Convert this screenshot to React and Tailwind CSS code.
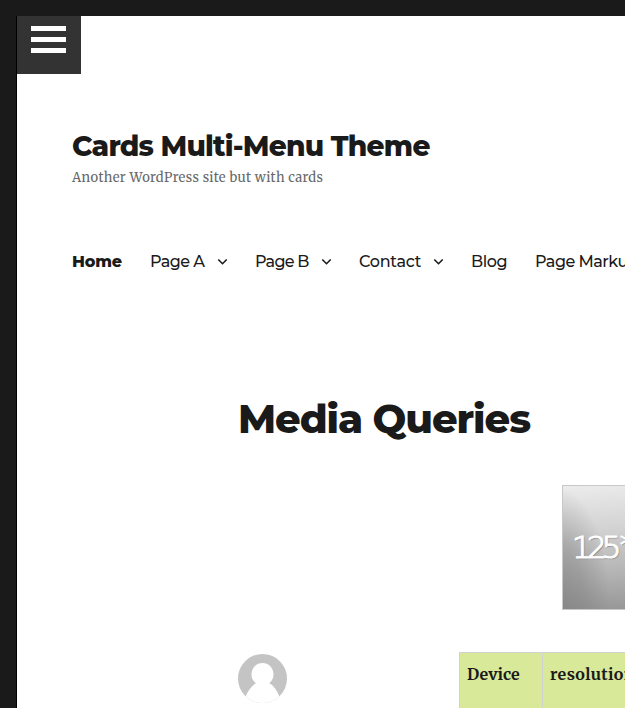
const sans = "font-['Montserrat','Inter',sans-serif]";
const serif = "font-['Merriweather','DejaVu_Serif_Condensed','DejaVu_Serif',serif]";

function Chevron() {
  return (
    <svg width="11" height="8" viewBox="0 0 11 8" className="shrink-0" fill="none" stroke="#1a1a1a" strokeWidth="1.6">
      <path d="M1.3 1.5 5.5 5.7 9.7 1.5" />
    </svg>
  );
}

function NavItem({ label, box, text, menu }) {
  return (
    <a className={`flex shrink-0 items-center ${box}`}>
      <span className={text}>{label}</span>
      {menu && <Chevron />}
    </a>
  );
}

export default function App() {
  return (
    <div className="flex h-[708px] w-[625px] flex-col overflow-hidden bg-[#1a1a1a] pt-4 pl-4 text-[#1a1a1a]">
      <div className="flex min-h-0 flex-1 flex-col overflow-hidden border-l border-black bg-white">
        <button className="flex h-[58px] w-16 shrink-0 flex-col gap-1.5 bg-[#333] pt-[10px] pl-[14px]">
          <span className="h-[5px] w-[35px] bg-white" />
          <span className="h-[5px] w-[35px] bg-white" />
          <span className="h-[5px] w-[35px] bg-white" />
        </button>

        <header className="flex shrink-0 flex-col pt-[54px] pl-[55px] whitespace-nowrap">
          <h1 className={`${sans} h-9 text-[28px] leading-9 font-extrabold tracking-[-0.78px]`}>Cards Multi-Menu Theme</h1>
          <p className={`${serif} mt-[5px] h-[18px] text-[13px] leading-[18px] tracking-[0.35px] text-[#686868]`}>Another WordPress site but with cards</p>
          <nav className={`${sans} mt-[63px] flex h-6 text-[16px] leading-6 font-medium`}>
            <NavItem label="Home" box="w-[78px]" text="font-extrabold tracking-[-0.2px]" />
            <NavItem label="Page A" box="w-[105px]" text="w-[67px] tracking-[-0.55px]" menu />
            <NavItem label="Page B" box="w-[104px]" text="w-[66px] tracking-[-0.75px]" menu />
            <NavItem label="Contact" box="w-[112px]" text="w-[74px] tracking-[-0.25px]" menu />
            <NavItem label="Blog" box="w-16" text="tracking-[-0.45px]" />
            <NavItem label="Page Markup" box="w-[110px]" text="tracking-[-0.5px]" />
          </nav>
        </header>

        <main className="flex shrink-0 flex-col pt-[121px] pl-[221px] whitespace-nowrap">
          <h2 className={`${sans} h-12 text-[40px] leading-[48px] font-extrabold tracking-[-1.08px]`}>Media Queries</h2>
          <div className="mt-[42px] ml-[324px] flex h-[125px] w-[125px] items-center border border-[#c8c8c8] bg-[radial-gradient(ellipse_55px_115px_at_-8px_115px,#77777799_0%,#77777766_50%,transparent_100%),linear-gradient(175deg,#ececec_0%,#d2d2d2_35%,#b4b4b4_68%,#939393_100%)] pl-[9px]">
            <div className="flex items-start font-['DejaVu_Sans_Light','DejaVu_Sans',sans-serif] text-[31px] leading-none font-extralight tracking-[-4.8px] text-white [-webkit-text-stroke:1.2px_white] [text-shadow:1px_1px_1px_#777]">
              <span className="-mt-px">125</span>
              <span className="-mt-1 ml-[3px]">*125</span>
            </div>
          </div>
          <div className="mt-[42px] flex items-start">
            <svg width="49" height="49" viewBox="0 0 49 49" className="mt-0.5 shrink-0">
              <defs>
                <clipPath id="avatar"><circle cx="24.5" cy="24.5" r="24.5" /></clipPath>
              </defs>
              <g clipPath="url(#avatar)">
                <path d="M0 0H49V49H0Z" fill="#c4c4c4" />
                <ellipse cx="24.5" cy="20.3" rx="11" ry="11.3" fill="#fff" />
                <path d="M7 44C10 36 15 31 18 29H31C35 31 39 36 42 44V49H7Z" fill="#fff" />
              </g>
            </svg>
            <div className={`${serif} ml-[172px] flex h-20 w-[300px] shrink-0 border border-[#d1d1d1] bg-[#d9e99a] text-base leading-7 font-bold`}>
              <div className="w-[83px] shrink-0 border-r border-[#d1d1d1] pt-[7px] pl-[7px]">Device</div>
              <div className="pt-[7px] pl-[7px] tracking-[0.4px]">resolution</div>
            </div>
          </div>
        </main>
      </div>
    </div>
  );
}
